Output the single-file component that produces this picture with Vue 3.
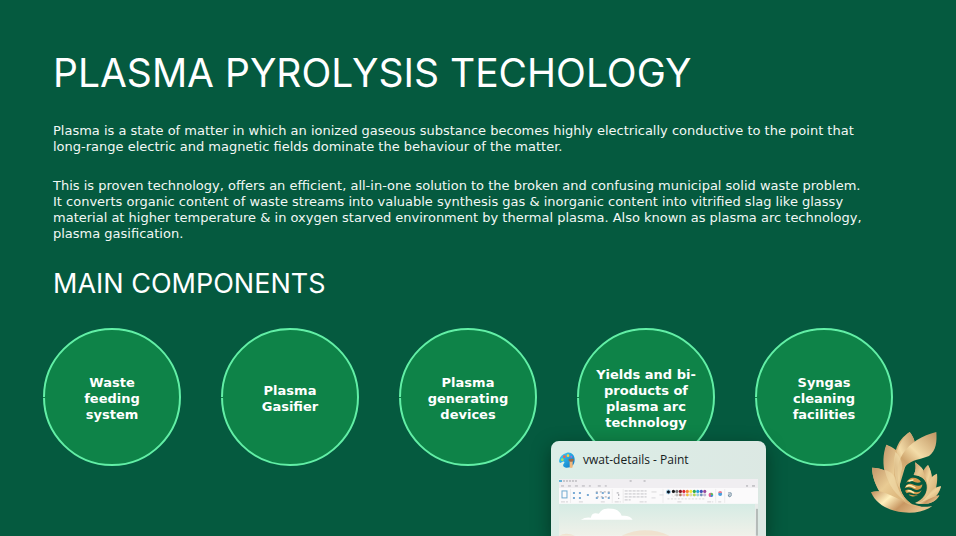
<script setup>
const components = [
  ['Waste', 'feeding', 'system'],
  ['Plasma', 'Gasifier'],
  ['Plasma', 'generating', 'devices'],
  ['Yields and bi-', 'products of', 'plasma arc', 'technology'],
  ['Syngas', 'cleaning', 'facilities'],
]

const topSwatches = ['#17171a', '#77777a', '#7d1522', '#dd2730', '#f77f35', '#f8e43a', '#2ca951', '#28a0dd', '#4050b8', '#98499b']
const lowSwatches = ['#ffffff', '#c3c3c3', '#b0785a', '#f9a5bd', '#f8c331', '#e9dfaa', '#b2df43', '#98d4e5', '#7194be', '#c3b4dc']
</script>

<template>
  <main class="slide">
    <h1>PLASMA PYROLYSIS TECHOLOGY</h1>
    <div class="copy">
      <p>
        Plasma is a state of matter in which an ionized gaseous substance becomes highly electrically conductive to the point that<br />
        long-range electric and magnetic fields dominate the behaviour of the matter.
      </p>
      <p>
        This is proven technology, offers an efficient, all-in-one solution to the broken and confusing municipal solid waste problem.<br />
        It converts organic content of waste streams into valuable synthesis gas &amp; inorganic content into vitrified slag like glassy<br />
        material at higher temperature &amp; in oxygen starved environment by thermal plasma. Also known as plasma arc technology,<br />
        plasma gasification.
      </p>
    </div>
    <h2>MAIN COMPONENTS</h2>
    <ul class="components">
      <li v-for="(lines, i) in components" :key="i">
        <span v-for="line in lines" :key="line">{{ line }}</span>
      </li>
    </ul>

    <svg class="logo" viewBox="30 24 216 252" aria-hidden="true">
      <defs>
        <linearGradient id="gold" x1="0" y1="0" x2="1" y2="1">
          <stop offset="0" stop-color="#c39563" />
          <stop offset="0.5" stop-color="#f0d49c" />
          <stop offset="1" stop-color="#c9985f" />
        </linearGradient>
        <linearGradient id="goldTop" x1="0.9" y1="0" x2="0.2" y2="1">
          <stop offset="0" stop-color="#c39a68" />
          <stop offset="0.45" stop-color="#f3dca8" />
          <stop offset="0.7" stop-color="#cfa56d" />
          <stop offset="1" stop-color="#e5c184" />
        </linearGradient>
        <linearGradient id="goldSide" x1="0" y1="0" x2="1" y2="0.8">
          <stop offset="0" stop-color="#c2976a" />
          <stop offset="0.45" stop-color="#e9cb93" />
          <stop offset="1" stop-color="#d6ad72" />
        </linearGradient>
        <linearGradient id="goldBase" x1="0" y1="0" x2="1" y2="0.4">
          <stop offset="0" stop-color="#c08e5c" />
          <stop offset="0.35" stop-color="#fff0bd" />
          <stop offset="0.65" stop-color="#c89762" />
          <stop offset="1" stop-color="#e5c18c" />
        </linearGradient>
      </defs>
      <path fill="#dcb67e" d="M149 30C130 42 114 60 108 84C98 76 88 71 79 68C74 92 72 118 76 147C62 140 48 137 36 137C37 165 46 187 58 208C48 207 40 208 33 211L129 262L185 254L155 246C133 234 119 210 119 190L136 133L164 86C168 64 162 46 149 30Z" />
      <path fill="url(#goldBase)" d="M33 211C60 206 90 208 115 224C132 244 157 253 185 254C199 255 210 254 217 252C196 268 163 275 129 271C85 267 48 246 33 211Z" />
      <path fill="url(#goldSide)" d="M36 137C66 138 92 148 108 170C117 200 133 234 155 246C120 238 90 214 58 208C46 185 37 165 36 137Z" />
      <path fill="url(#goldSide)" d="M79 68C104 82 124 104 128 140L119 190C123 216 136 234 155 246C122 232 90 200 76 158C68 128 68 96 79 68Z" />
      <path fill="url(#goldTop)" d="M149 30C162 46 168 64 164 86L136 133C120 150 117 180 121 200C127 222 140 238 155 246C125 226 106 198 103 160C98 110 114 58 149 30Z" />
      <path fill="url(#goldTop)" d="M229 30C231 58 229 86 207 102C184 112 156 112 136 133C124 148 120 168 119 190C108 158 112 122 128 96C150 62 187 40 229 30Z" />
      <path fill="#f4e2b2" opacity="0.5" d="M106 90C120 102 127 120 127 138C120 158 118 180 119 200C105 178 97 132 106 90Z" />
      <path fill="#f4e2b2" opacity="0.45" d="M74 144C92 148 104 160 109 176C113 200 122 222 140 240C110 222 84 190 74 144Z" />
      <path fill="#d9b57b" d="M165 121C178 131 190 141 194 155L204 129C212 142 216 158 216 170L231 155C233 170 231 184 228 198L243 193C240 206 235 215 229 222L238 220C227 242 199 252 165 243C190 232 203 213 200 190C197 168 180 160 161 159C168 146 168 134 165 121Z" />
      <path fill="url(#goldSide)" d="M165 121C181 131 192 143 197 160L203 190C196 170 180 160 161 159C168 146 168 134 165 121Z" />
      <path fill="url(#gold)" d="M204 129C212 144 218 165 214 185L201 222C207 196 200 170 189 148C193 140 198 134 204 129Z" />
      <path fill="url(#goldSide)" d="M231 155C232 176 228 196 216 210L188 234C204 212 206 180 212 168C218 162 224 158 231 155Z" />
      <path fill="url(#gold)" d="M243 193C238 210 226 226 208 236L180 242C202 228 210 208 222 200C229 196 236 194 243 193Z" />
      <path fill="url(#goldBase)" d="M238 220C227 242 199 252 165 243C192 242 212 226 238 220Z" />
      <g fill="#d49a4b">
        <path d="M139 183C142 173 151 167 160 167C170 167 179 172 183 180C173 184 165 181 158 178C150 176 145 178 139 183Z" />
        <path d="M134 199C136 190 144 184 152 185C164 187 172 197 187 187C187 201 174 207 163 202C153 197 145 193 134 199Z" />
        <path d="M135 206C145 199 153 204 160 208C169 213 178 211 185 204C182 213 174 218 166 217C155 215 149 208 140 214Z" />
        <path d="M146 218C154 216 162 224 174 219C165 225 154 225 146 218Z" />
      </g>
      <path fill="none" stroke="#fff0b4" stroke-width="4" stroke-linecap="round" d="M140 193C150 186 157 194 165 197M144 207C150 204 156 210 161 212M147 177L159 174" />
    </svg>

    <aside class="preview">
      <header>
        <svg class="paint" viewBox="0 0 48 48" aria-hidden="true">
          <defs>
            <linearGradient id="palette" x1="0" y1="0" x2="1" y2="1">
              <stop offset="0" stop-color="#43d2f7" />
              <stop offset="1" stop-color="#0872c5" />
            </linearGradient>
          </defs>
          <path fill="url(#palette)" d="M22 3C35-2 47 8 47 23C47 38 37 48 21 47C12 46 10 39 15 34C19 29 13 26 8 31C2 36-1 30 1 23C3 13 11 6 22 3Z" />
          <circle cx="27" cy="11" r="4" fill="#ffcf38" />
          <circle cx="16" cy="14" r="4" fill="#f0624d" />
          <circle cx="10" cy="23" r="4" fill="#a8e858" />
          <circle cx="37" cy="14" r="3" fill="#a46cd7" />
          <path fill="#f0b87c" d="M32 26H41V46Q36 50 32 46Z" />
          <path fill="#9c6a48" d="M29 20H44V26L40 29H33L29 26Z" />
        </svg>
        <span>vwat-details - Paint</span>
      </header>
      <svg class="thumb" viewBox="0 0 200 57" aria-hidden="true">
        <defs>
          <linearGradient id="sky" x1="0" y1="0" x2="0" y2="1">
            <stop offset="0" stop-color="#d5ebe4" />
            <stop offset="1" stop-color="#f0f1e9" />
          </linearGradient>
        </defs>
        <rect width="200" height="57" fill="#fbfafb" />
        <rect width="200" height="9" fill="#f0eef1" />
        <rect y="25" width="200" height="32" fill="url(#sky)" />
        <path fill="#fff" d="M22 41Q27 38 32 39Q33 33 40 35Q44 28 53 30Q60 30 63 37Q71 36 74 41Z" />
        <path fill="#f0dfc8" opacity="0.8" d="M0 57Q7 53 16 57ZM63 57Q87 46 111 57Z" />
        <rect x="197" y="25" width="3" height="32" fill="#e7ebe9" />
        <rect x="198" y="30" width="2" height="27" fill="#b4bbb8" />
        <g fill="none" stroke="#83838a" stroke-width="1" opacity="0.7">
          <path stroke="#249ad0" stroke-width="2" d="M0 2H3" />
          <path stroke-dasharray="2 1" d="M4 2H18" />
          <path stroke-dasharray="3 4" d="M2 7H32M39 7H48" opacity="0.8" />
          <path d="M71 2H73M85 2H87M188 7H190M194 7H197" />
          <path stroke-dasharray="4 1" d="M2 23H9M20 23H25M42 23H47M56 23H62M81 23H88M119 23H124M149 23H155M160 23H163" opacity="0.45" />
          <rect x="3" y="12" width="5" height="7" stroke="#3488bd" />
          <path stroke="#4389c6" stroke-width="2" stroke-dasharray="2 4" d="M14 14H25M14 19H25M28 16H32M37 14H51M37 19H51" />
          <path stroke-dasharray="2 2" d="M37 13H51M38 18H51M58 14H62M60 15V20" />
          <path stroke-dasharray="3 1" d="M66 12H88M66 15H88M66 18H88M66 21H72" opacity="0.65" />
          <path d="M93 13H98M93 19H97M101 16H105" opacity="0.4" />
        </g>
        <circle cx="110" cy="13" r="2" fill="#06111f" stroke="#a2cde5" />
        <circle v-for="(color, i) in topSwatches" :key="color" :cx="115 + i * 3.5" cy="12.5" r="1.6" :fill="color" />
        <circle v-for="(color, i) in lowSwatches" :key="color" :cx="115 + i * 3.5" cy="16" r="1.4" :fill="color" stroke="#a5a5a5" stroke-width="0.2" />
        <path d="M109 20H147" stroke="#d8d8d8" stroke-dasharray="2 1.5" />
        <circle cx="152.500" cy="16" r="2.200" fill="#e65d9a" />
        <path d="M152.500 14V16H155A2 2 0 0 0 152.500 14Z" fill="#60be56" />
        <path d="M152.500 16H155A2 2 0 0 1 152.500 18Z" fill="#3495db" />
        <circle cx="162" cy="15" r="2" fill="#4a9fdc" />
        <path d="M160 14A2 2 0 0 1 164 14" fill="#e58196" />
        <path d="M170 14H173V17L171 18L170 16H172" stroke="#708ca0" fill="none" />
        <path d="M104.500 10V24M157.500 10V24M166.500 10V24M53.500 10V24M64.500 10V24M11.500 10V24" stroke="#dedede" stroke-width="0.500" />
      </svg>
    </aside>
  </main>
</template>

<style>
body {
  margin: 0;
  background: #055a3f;
}
</style>

<style scoped>
.slide {
  position: relative;
  box-sizing: border-box;
  min-height: 100vh;
  padding: 49px 43px 24px;
  overflow: hidden;
  color: #fff;
  background: #055a3f;
  font-family: Inter, sans-serif;
}
h1, h2 {
  margin: 0;
  padding-left: 10px;
  font-weight: 400;
  white-space: nowrap;
}
h1 {
  font-size: 39px;
  line-height: 48px;
}
h2 {
  margin-top: 24px;
  font-size: 27px;
  line-height: 36px;
}
.copy {
  display: grid;
  gap: 23px;
  margin-top: 26px;
  padding-left: 10px;
  color: #f2f8f5;
  font-family: "DejaVu Sans", sans-serif;
  font-size: 13px;
  line-height: 16px;
  white-space: nowrap;
}
.copy p {
  margin: 0;
}
.components {
  display: flex;
  justify-content: space-between;
  margin: 26px 20px 0 0;
  padding: 0;
  list-style: none;
}
.components li {
  position: relative;
  box-sizing: border-box;
  display: flex;
  flex-direction: column;
  align-items: center;
  justify-content: center;
  width: 138px;
  height: 138px;
  padding-top: 4px;
  border: 2px solid #62efa6;
  border-radius: 50%;
  background: #0e8348;
  font-family: "DejaVu Sans", sans-serif;
  font-size: 13px;
  font-weight: 700;
  line-height: 16px;
  white-space: nowrap;
}
.components li::before {
  content: "";
  position: absolute;
  left: -2px;
  top: 67px;
  width: 2px;
  height: 1px;
  background: #0e8348;
}
.logo {
  position: absolute;
  right: 14px;
  bottom: 22px;
  width: 72px;
  height: 84px;
}
.preview {
  position: absolute;
  left: 551px;
  bottom: 0;
  box-sizing: border-box;
  width: 215px;
  padding: 8px 8px 0;
  border-radius: 8px 8px 0 0;
  background: linear-gradient(100deg, #dceee7, #dce8e3);
  box-shadow: 0 6px 18px rgba(0, 20, 12, 0.5);
  color: #16201c;
}
.preview header {
  display: flex;
  align-items: center;
  gap: 8px;
  height: 22px;
  margin-bottom: 8px;
  font-family: "Open Sans", sans-serif;
  font-size: 12px;
  line-height: 22px;
}
.paint {
  width: 16px;
  height: 16px;
}
.thumb {
  display: block;
  width: 100%;
}
</style>
